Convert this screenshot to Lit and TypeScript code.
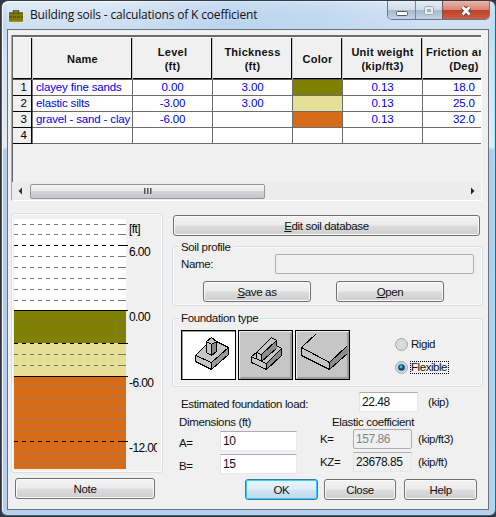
import { LitElement, html, svg, css } from "lit";
import { customElement, property } from "lit/decorators.js";

interface Soil { name: string; level: string; thickness: string; color: string; weight: string; angle: string }

const SOILS: Soil[] = [
  { name: "clayey fine sands", level: "0.00", thickness: "3.00", color: "#808000", weight: "0.13", angle: "18.0" },
  { name: "elastic silts", level: "-3.00", thickness: "3.00", color: "#e6e096", weight: "0.13", angle: "25.0" },
  { name: "gravel - sand - clay", level: "-6.00", thickness: "", color: "#d66b18", weight: "0.13", angle: "32.0" },
  { name: "", level: "", thickness: "", color: "#ffffff", weight: "", angle: "" },
];

@customElement("soil-grid")
class SoilGrid extends LitElement {
  static styles = css`
    :host { display: block; height: 166px; box-sizing: border-box; border-left: 1px solid #a8a8a8; border-bottom: 1px solid #fff; border-right: 1px solid #fafafa; background: #f0f0f0; overflow: hidden; }
    .frame { height: 147px; box-sizing: border-box; border-top: 2px solid #6c6c6c; border-left: 1px solid #646464; }
    .row { display: grid; grid-template-columns: 20px 100px 80px 80px 50px 80px 59px; height: 16px; font: 11.5px "Liberation Sans", sans-serif; letter-spacing: -0.15px; color: #0000f0; }
    .cell { box-sizing: border-box; background: #fff; border-right: 1px solid #6d6d6d; border-bottom: 1px solid #6d6d6d; text-align: center; line-height: 15px; white-space: nowrap; overflow: hidden; }
    .cell:last-child { border-right: 0; text-align: left; text-indent: 30px; }
    .cell.name { text-align: left; padding-left: 3px; }
    .cell.idx { background: #f0f0f0; color: #000; border-right: 1px solid #777; border-bottom: 1px solid #000; box-shadow: inset -1px 0 #000; padding-left: 2px; }
    .head { height: 43px; color: #000; font-size: 11px; font-weight: bold; letter-spacing: 0.27px; }
    .head .cell { background: #f0f0f0; border-right: 1px solid #c4c4c4; border-bottom: 1px solid #555; box-shadow: inset -1px -1px #000; display: flex; align-items: center; justify-content: center; line-height: 14px; color: #111; border-top: 1px solid #fff; }
    .head .cell:last-child { border-right: 0; box-shadow: inset 0 -1px #000; justify-content: flex-start; text-align: center; text-indent: 0; padding-left: 3px; }
    .bar { display: flex; height: 18px; align-items: center; background: #ececec; }
    .arrow { width: 18px; height: 18px; display: block; flex: none; }
    .track { flex: 1; display: flex; }
    .thumb { width: 235px; height: 15px; box-sizing: border-box; border: 1px solid #959595; border-radius: 2px; background: linear-gradient(#f4f4f4, #e8e8e9 48%, #d3d4d6 50%, #c4c5c8); display: flex; align-items: center; justify-content: center; gap: 1px; }
    .grip { width: 2px; height: 6px; box-sizing: border-box; border-left: 1px solid #555; border-right: 1px solid #999; }
  `;
  render() {
    return html`
      <div class="frame">
        <div class="row head">
          <div class="cell"></div><div class="cell">Name</div><div class="cell">Level<br />(ft)</div>
          <div class="cell">Thickness<br />(ft)</div><div class="cell">Color</div>
          <div class="cell">Unit weight<br />(kip/ft3)</div><div class="cell">Friction angle<br />(Deg)</div>
        </div>
        ${SOILS.map((s, i) => html`<div class="row">
          <div class="cell idx">${i + 1}</div><div class="cell name">${s.name}</div><div class="cell">${s.level}</div>
          <div class="cell">${s.thickness}</div><div class="cell" style="background:${s.color}"></div>
          <div class="cell">${s.weight}</div><div class="cell">${s.angle}</div></div>`)}
      </div>
      <div class="bar">
        <svg class="arrow" viewBox="0 0 18 18"><path d="M10 5.500v7L6.500 9z" fill="#333" /></svg>
        <div class="track"><div class="thumb"><i class="grip"></i><i class="grip"></i><i class="grip"></i></div></div>
        <svg class="arrow" viewBox="0 0 18 18"><path d="M8 5.500v7l3.500-3.500z" fill="#222" /></svg>
      </div>`;
  }
}

@customElement("soil-chart")
class SoilChart extends LitElement {
  static styles = css`
    :host { display: block; }
    .chart { display: block; font: 12px "Liberation Sans", sans-serif; letter-spacing: -0.6px; }
  `;
  render() {
    const line = (y: number, color: string) => svg`<path d="M0 ${y + 0.5}H105" stroke=${color} stroke-dasharray="4 4" /><path d="M105 ${y + 0.5}h7" stroke=${color} />`;
    const major = (y: number, dashed: boolean) => svg`<path d="M0 ${y + 0.5}H112" stroke="#000" stroke-dasharray=${dashed ? "4 4" : "none"} /><path d="M108 ${y + 0.5}h6" stroke="#000" />`;
    return html`<svg class="chart" width="143" height="250" viewBox="0 0 143 250" shape-rendering="crispEdges">
      <rect width="112" height="91" fill="#fff" /><rect y="91" width="112" height="33" fill="#808000" />
      <rect y="124" width="112" height="33" fill="#e6e096" /><rect y="157" width="112" height="93" fill="#d66b18" />
      ${[5, 15, 37, 48, 59, 70, 81, 135, 146].map((y) => line(y, "#777"))}
      ${[102, 113].map((y) => line(y, "#7b7460"))}
      ${[167, 178, 189, 200, 211, 233, 243].map((y) => line(y, "#8a7f7c"))}
      ${major(26, true)}${major(91, false)}${major(124, true)}${major(157, false)}${major(222, true)}
      <text x="115" y="14">[ft]</text><text x="115" y="37">6.00</text><text x="115" y="102">0.00</text>
      <text x="115" y="168">-6.00</text><text x="115" y="233">-12.00</text>
    </svg>`;
  }
}

@customElement("push-button")
class PushButton extends LitElement {
  @property() label = "";
  @property({ type: Boolean }) mnemonic = false;
  @property({ type: Boolean, reflect: true }) primary = false;
  static styles = css`
    :host { display: flex; box-sizing: border-box; height: 21px; border: 1px solid #707070; border-radius: 3px; box-shadow: inset 0 0 0 1px #fbfbfb; background: linear-gradient(#f3f3f3, #ebebeb 48%, #dcdcdc 52%, #cecece); align-items: center; justify-content: center; }
    :host([primary]) { border-color: #2e7ea8; box-shadow: inset 0 0 0 1px #40cdf5; background: linear-gradient(#eaf4fa, #dfeef7 48%, #cfe4f0 52%, #bcd9ea); }
    .u { text-decoration: underline; text-underline-offset: 1px; }
  `;
  render() {
    return html`<span>${this.mnemonic ? html`<span class="u">${this.label[0]}</span>${this.label.slice(1)}` : this.label}</span>`;
  }
}

@customElement("app-root")
class AppRoot extends LitElement {
  static styles = css`
    :host { display: block; width: 496px; height: 517px; background: #35353f; font: 11.5px "Liberation Sans", sans-serif; letter-spacing: -0.35px; color: #111; }
    .window { box-sizing: border-box; width: 495px; height: 516px; margin-left: 1px; padding: 0 5px 6px; border: 1px solid #4d5866; border-top-color: #343c48; border-radius: 7px 7px 6px 6px; box-shadow: inset 1px 1px 0 #f2f9ff, inset -1px -1px 0 #a6e4fa; background: linear-gradient(#dbe8f5 0, #cbdcf0 12px, #c3d9ef 29px, #d2e2f3 60px, #e0ebf6 146px, #b3cbe9 149px, #b8d0ed 100%); }
    .title { display: flex; height: 28px; align-items: flex-start; background: linear-gradient(100deg, #fff3 0 20%, #aecdee66 45%, #b9d4f066 65%, #fff3 90%); }
    .logo { margin: 8px 7px 0 2px; width: 14px; height: 13px; flex: none; }
    .caption { flex: 1; font: 12px "Open Sans", sans-serif; line-height: 28px; white-space: nowrap; color: #111; letter-spacing: -0.17px; }
    .controls { display: flex; width: 103px; height: 19px; flex: none; box-sizing: border-box; border: 1px solid #68788c; border-top: 0; border-radius: 0 0 5px 5px; overflow: hidden; }
    .ctl { display: block; height: 19px; background: linear-gradient(#e4edf6, #cfdbe8 48%, #a9bace 50%, #c4d6e9); }
    .ctl.close { background: linear-gradient(#e9b5a9, #d88877 45%, #bd4028 50%, #cf6247); }
    .client { box-sizing: border-box; width: 482px; height: 481px; border: 1px solid #667381; background: #f0f0f0; padding: 5px 6px 0 3px; }
    .body { display: grid; grid-template-columns: 152px 311px; column-gap: 9px; margin-top: 12px; }
    .profile { height: 260px; box-sizing: border-box; border: 1px solid #d5dfe5; border-radius: 3px; padding: 5px 2px; box-shadow: inset 0 0 0 1px #fbfbfb; }
    .note { margin: 5px 8px 0 4px; }
    .right { display: flex; flex-direction: column; padding-top: 2px; }
    .edit { margin: 0 3px 0 1px; }
    .group { box-sizing: border-box; border: 1px solid #d5dfe5; border-radius: 3px; box-shadow: inset 0 0 0 1px #fbfbfb; }
    .legend { display: block; width: max-content; padding: 0 3px 0 2px; margin: -7px 0 0 6px; line-height: 14px; height: 14px; background: #f0f0f0; }
    .found .legend { margin-top: -8px; }
    .soil { height: 60px; margin-top: 10px; }
    .namerow { display: flex; height: 20px; margin: 0 8px; align-items: center; }
    .namerow .lbl { width: 94px; }
    .field { box-sizing: border-box; height: 20px; border: 1px solid #e3e9ef; border-top-color: #abadb3; border-left-color: #e2e3ea; background: #fff; padding-left: 2px; line-height: 18px; font-size: 12px; letter-spacing: -0.45px; }
    .field.off { border: 1px solid #afafaf; border-radius: 2px; background: #f0f0f0; color: #838383; }
    .field.ro { background: #f0f0f0; }
    .field.wide { flex: 1; }
    .pair { display: flex; gap: 25px; margin: 7px 0 0 30px; }
    .pair push-button { width: 108px; }
    .found { height: 69px; margin-top: 12px; }
    .types { display: flex; margin: 5px 0 0 8px; gap: 2px; }
    .type { width: 55px; height: 50px; display: block; flex: none; }
    .radios { display: flex; flex-direction: column; gap: 9px; margin: 7px 0 0 43px; }
    .radio { display: flex; height: 14px; align-items: center; gap: 2px; }
    .dot { width: 13px; height: 13px; flex: none; display: block; }
    .rl { height: 13px; border: 1px dotted transparent; padding-right: 1px; box-sizing: border-box; line-height: 11px; letter-spacing: -0.45px; }
    .rl.focus { border-color: #000; }
    .load { display: grid; grid-template-columns: 178px 59px 1fr; height: 20px; margin: 5px 0 0 9px; align-items: center; }
    .load .unit { padding-left: 10px; }
    .load .lbl { padding-top: 3px; }
    .dims { display: grid; grid-template-columns: 141px 1fr; margin-left: 7px; }
    .dim { display: grid; grid-template-columns: 41px 77px; grid-template-rows: 19px 20px 3px 20px; align-items: center; }
    .h, .gap { grid-column: 1 / -1; }
    .dim .l { padding-top: 3px; }
    .ela { display: grid; grid-template-columns: 33px 59px 1fr; grid-template-rows: 17px 20px 3px 20px; align-items: center; }
    .ela .h { padding-left: 12px; padding-top: 2px; }
    .ela .unit { padding-left: 6px; }
    .actions { display: flex; margin: 5px 0 0 73px; }
    .actions push-button { width: 73px; margin-right: 6px; }
    .actions push-button:nth-child(2) { margin-right: 8px; }
    span { white-space: nowrap; }
  `;

  private typeIcon(kind: number) {
    const face = kind === 0 ? "#fff" : "#c6c6c6";
    const art = [
      svg`<path d="M14.500 25.500L30.500 9.500l17 8v7L30.500 39.500l-16-8z" fill="#c6c6c6" /><path d="M30.500 32.500l17-15v7l-17 15z" fill="#999" /><path d="M25.500 14.500l-11 11v6l16 8 17-15v-7l-12-6M14.500 25.500l16 7 17-15M30.500 32.500v7" fill="none" stroke="#000" /><path d="M25.500 11.500l5-4 5 4v10l-5 4-5-3z" fill="#c6c6c6" /><path d="M30.500 14.500l5-3v10l-5 4z" fill="#888" /><path d="M25.500 11.500l5-4 5 4-5 3zM25.500 11.500v11l5 3 5-4v-10M30.500 14.500v11" fill="none" stroke="#000" />`,
      svg`<path d="M13.500 26.500l5-4 15-15 5 3v5l5 3v7l-15 14-15-7z" fill="#c6c6c6" /><path d="M23.500 24.500l15-14v8l-15 13zM28.500 33.500l15-15v7l-15 14z" fill="#8c8c8c" /><path d="M18.500 28.500v-6l15-15 5 3v5l5 3v7l-15 14-15-7v-6l5-4M18.500 22.500l5 2v7l5 2 15-15M23.500 24.500l15-14M23.500 31.500l15-13M13.500 26.500l5 3M18.500 28.500l5 3M28.500 33.500v6" fill="none" stroke="#000" />`,
      svg`<path d="M34.500 32.500l18-17v8l-18 16z" fill="#8c8c8c" /><path d="M21.500 3.500l-15 14 28 15 18-17M6.500 17.500v8l28 14 18-16M34.500 32.500v7" fill="none" stroke="#000" />`,
    ][kind];
    return html`<svg class="type" viewBox="0 0 55 50" shape-rendering="crispEdges"><rect x=".5" y=".5" width="54" height="49" fill=${face} stroke="#000" />
      ${kind ? svg`<path d="M1.500 48V1.500H53" stroke="#eee" fill="none" /><path d="M53.500 2v46.500H2M52.500 3v44.500H3" stroke="#9b9b9b" fill="none" />` : svg`<path d="M1.500 49V1.500H54" stroke="#999" fill="none" />`}${art}</svg>`;
  }

  private radio(text: string, on: boolean) {
    return html`<div class="radio"><svg class="dot" viewBox="0 0 13 13"><circle cx="6.500" cy="6.500" r="5.800" fill="#f4f4f4" stroke="#8e8f8f" /><circle cx="6.500" cy="6.500" r="4" fill=${on ? "#c9e2ee" : "#dedede"} stroke=${on ? "#a7c3d3" : "#c9cbcd"} />
      ${on ? svg`<circle cx="6.500" cy="6.500" r="3.300" fill="#134a74" /><circle cx="6" cy="5.800" r="1.500" fill="#48b4dc" />` : ""}</svg><span class="rl ${on ? "focus" : ""}">${text}</span></div>`;
  }

  render() {
    return html`<div class="window">
      <div class="title">
        <svg class="logo" viewBox="0 0 14 13"><path d="M4.500 4V2h5v2" fill="none" stroke="#4a4a22" stroke-width="1.500" /><rect y="3.500" width="14" height="9" fill="#807c0c" /><path d="M0 4h14" stroke="#4d4b14" /><path d="M0 8h14" stroke="#37370c" stroke-dasharray="3 1" /><path d="M0 12.500h14" stroke="#a5981c" /></svg>
        <span class="caption">Building soils - calculations of K coefficient</span>
        <div class="controls">
          <svg class="ctl" width="28" viewBox="0 0 28 19"><rect x="8.500" y="10.500" width="11" height="4" rx="1" fill="#fff" stroke="#535c68" /><path d="M27.500 0v19" stroke="#77879b" /></svg>
          <svg class="ctl" width="27" viewBox="0 0 27 19"><rect x="8.500" y="5.500" width="9" height="8" rx="1" fill="#e6ecf2" stroke="#9aa8b8" /><rect x="11.500" y="8.500" width="3" height="2" fill="#b8c6d6" stroke="#9aa8b8" /><path d="M26.500 0v19" stroke="#77505a" /></svg>
          <svg class="ctl close" width="46" viewBox="0 0 46 19"><path d="M19.500 6l7 7.500M26.500 6l-7 7.500" stroke="#553a40" stroke-width="4.500" /><path d="M19.500 6l7 7.500M26.500 6l-7 7.500" stroke="#fff" stroke-width="2.700" /></svg>
        </div>
      </div>
      <div class="client">
        <soil-grid></soil-grid>
        <div class="body">
          <div>
            <div class="profile"><soil-chart></soil-chart></div>
            <push-button class="note" label="Note"></push-button>
          </div>
          <div class="right">
            <push-button class="edit" label="Edit soil database" mnemonic></push-button>
            <div class="group soil">
              <span class="legend">Soil profile</span>
              <div class="namerow"><span class="lbl">Name:</span><div class="field off wide"></div></div>
              <div class="pair"><push-button label="Save as" mnemonic></push-button><push-button label="Open" mnemonic></push-button></div>
            </div>
            <div class="group found">
              <span class="legend">Foundation type</span>
              <div class="types">${[0, 1, 2].map((k) => this.typeIcon(k))}
                <div class="radios">${this.radio("Rigid", false)}${this.radio("Flexible", true)}</div></div>
            </div>
            <div class="load"><span class="lbl">Estimated foundation load:</span><div class="field">22.48</div><span class="unit">(kip)</span></div>
            <div class="dims">
              <div class="dim"><span class="h">Dimensions (ft)</span>
                <span class="l">A=</span><div class="field">10</div><i class="gap"></i>
                <span class="l">B=</span><div class="field">15</div></div>
              <div class="ela"><span class="h">Elastic coefficient</span>
                <span>K=</span><div class="field off">157.86</div><span class="unit">(kip/ft3)</span><i class="gap"></i>
                <span>KZ=</span><div class="field ro">23678.85</div><span class="unit">(kip/ft)</span></div>
            </div>
            <div class="actions"><push-button label="OK" primary></push-button><push-button label="Close"></push-button><push-button label="Help"></push-button></div>
          </div>
        </div>
      </div>
    </div>`;
  }
}
